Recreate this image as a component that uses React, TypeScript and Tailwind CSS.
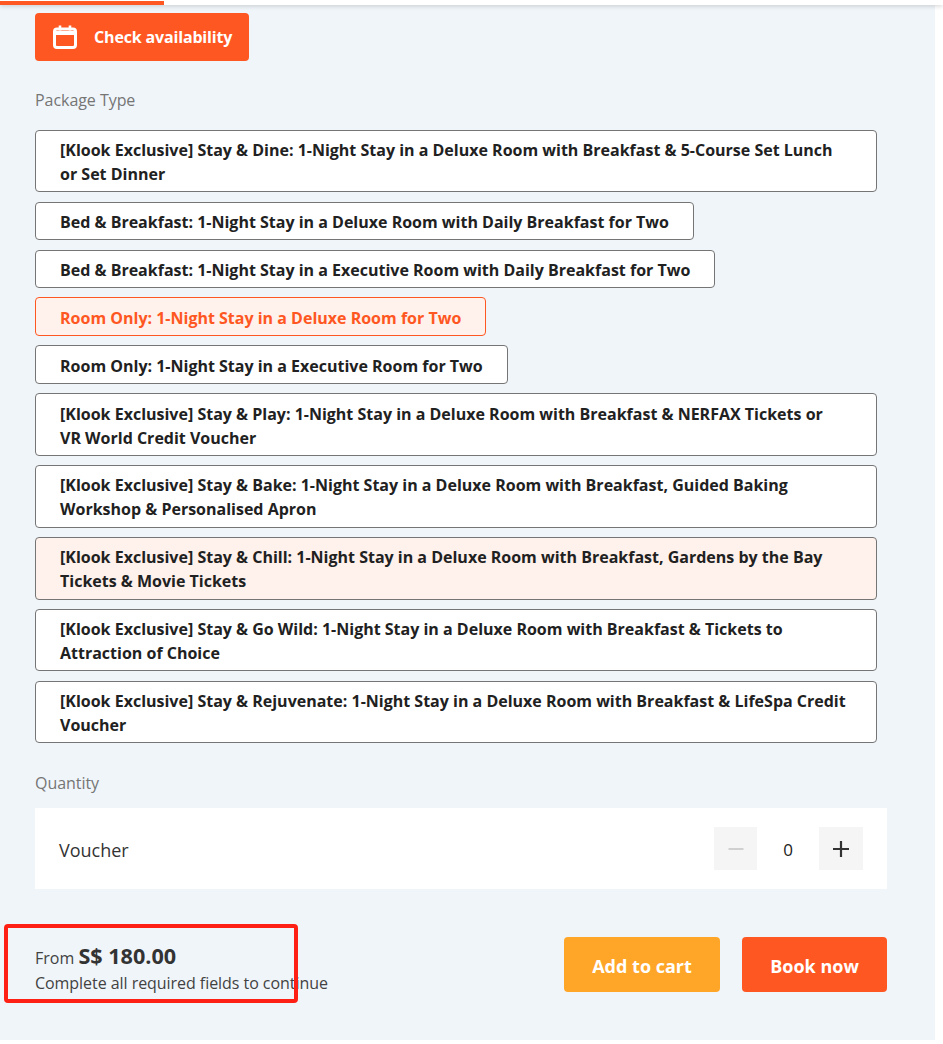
const packages = [
  { label: "[Klook Exclusive] Stay & Dine: 1-Night Stay in a Deluxe Room with Breakfast & 5-Course Set Lunch or Set Dinner" },
  { label: "Bed & Breakfast: 1-Night Stay in a Deluxe Room with Daily Breakfast for Two" },
  { label: "Bed & Breakfast: 1-Night Stay in a Executive Room with Daily Breakfast for Two" },
  { label: "Room Only: 1-Night Stay in a Deluxe Room for Two", state: "active" },
  { label: "Room Only: 1-Night Stay in a Executive Room for Two" },
  { label: "[Klook Exclusive] Stay & Play: 1-Night Stay in a Deluxe Room with Breakfast & NERFAX Tickets or\nVR World Credit Voucher", full: true },
  { label: "[Klook Exclusive] Stay & Bake: 1-Night Stay in a Deluxe Room with Breakfast, Guided Baking Workshop & Personalised Apron" },
  { label: "[Klook Exclusive] Stay & Chill: 1-Night Stay in a Deluxe Room with Breakfast, Gardens by the Bay Tickets & Movie Tickets", state: "hover" },
  { label: "[Klook Exclusive] Stay & Go Wild: 1-Night Stay in a Deluxe Room with Breakfast & Tickets to Attraction of Choice" },
  { label: "[Klook Exclusive] Stay & Rejuvenate: 1-Night Stay in a Deluxe Room with Breakfast & LifeSpa Credit Voucher" },
];

const CalendarIcon = () => (
  <svg width="24" height="24" viewBox="0 0 24 24" fill="none" stroke="currentColor" strokeWidth="3">
    <rect x="1.5" y="4" width="21" height="18.5" rx="2.5" />
    <path d="M1.5 8h21" strokeWidth="4" />
    <path d="M7 0.5v5M17 0.5v5" strokeWidth="2.6" />
  </svg>
);

export default function App() {
  return (
    <div className="relative h-[1044px] w-[943px] overflow-hidden bg-white font-['Open_Sans',sans-serif]">
      {/* Sticky tab bar */}
      <div className="relative z-10 h-[5px] w-full bg-white shadow-[0_1px_5px_rgba(0,0,0,0.18)]">
        <div className="h-[4px] w-[164px] translate-y-[1px] bg-[#ff5722]" />
      </div>

      <div className="h-[1035px] w-[935px] bg-[#f0f5fa] px-[35px] pt-2">
        <button className="flex h-12 w-[214px] items-center gap-[17px] rounded-sm bg-[#ff5722] pl-[18px] text-base font-bold tracking-[-0.16px] text-white">
          <CalendarIcon />
          Check availability
        </button>

        <p className="mt-[27px] text-base leading-6 tracking-[-0.05px] text-[#757575]">Package Type</p>

        <div className="mt-[17.75px] flex w-[842px] flex-col items-start gap-[9.2px]">
          {packages.map((p) => (
            <div
              key={p.label}
              className={`rounded-sm border px-6 pt-[7.4px] pb-[5.3px] text-base leading-6 font-bold whitespace-pre-line ${
                p.full ? "w-full" : ""
              } ${
                p.state === "active"
                  ? "border-[#ff5722] bg-[#fff1eb] text-[#ff5722]"
                  : p.state === "hover"
                    ? "border-[#757575] bg-[#fff1eb] text-[#212121]"
                    : "border-[#757575] bg-white text-[#212121]"
              }`}
            >
              {p.label}
            </div>
          ))}
        </div>

        <p className="mt-[27.6px] text-base leading-6 tracking-[-0.05px] text-[#757575]">Quantity</p>

        <div className="mt-[13px] flex h-[81px] w-[852px] items-center justify-between bg-white px-6">
          <span className="pt-1 text-lg text-[#333333]">Voucher</span>
          <div className="flex items-center">
            <div className="flex h-[43px] w-[43px] items-center justify-center bg-[#f5f5f5] pt-0.5">
              <svg width="16" height="16" viewBox="0 0 16 16">
                <path d="M0.5 8h15" stroke="#d0d0d0" strokeWidth="2" />
              </svg>
            </div>
            <span className="w-[62px] pt-0.5 text-center text-[17px] text-[#212121]">0</span>
            <div className="flex h-[43px] w-[44px] items-center justify-center bg-[#f5f5f5] pt-0.5">
              <svg width="16" height="16" viewBox="0 0 16 16">
                <path d="M0 8h16M8 0v16" stroke="#333333" strokeWidth="2.2" />
              </svg>
            </div>
          </div>
        </div>

        <div className="mt-12 flex w-[852px] items-start justify-between">
          <div className="pt-[7px]">
            <p className="text-base leading-6 text-[#424242]">
              From <span className="text-[21.6px] font-bold text-[#333333]">S$ 180.00</span>
            </p>
            <p className="mt-px text-base leading-6 tracking-[-0.05px] text-[#424242]">Complete all required fields to continue</p>
          </div>
          <div className="flex gap-[22px]">
            <button className="h-[55px] w-[156px] rounded-sm bg-[#ffa628] pt-1 text-lg font-bold text-white">
              Add to cart
            </button>
            <button className="h-[55px] w-[145px] rounded-sm bg-[#ff5722] pt-1 text-lg font-bold text-white">
              Book now
            </button>
          </div>
        </div>
      </div>

      {/* Red annotation drawn over the price */}
      <div className="absolute top-[924px] left-1 h-[79px] w-[294px] rounded-[4px] border-[4px] border-[#ff2015]" />
    </div>
  );
}
